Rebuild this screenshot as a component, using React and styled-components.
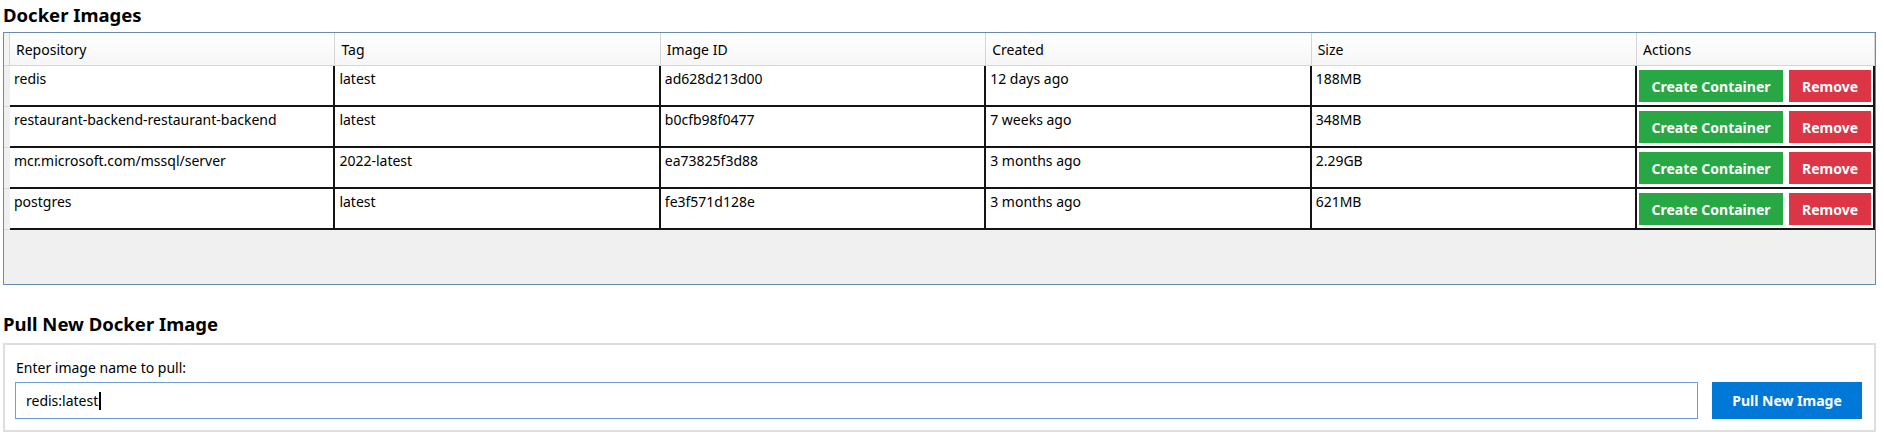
import React from 'react';
import styled, { createGlobalStyle } from 'styled-components';

const Global = createGlobalStyle`
  html, body { margin: 0; padding: 0; background: #ffffff; }
  body { font-family: "Noto Sans", "Open Sans", sans-serif; color: #000; }
  * { box-sizing: border-box; }
`;

const Page = styled.div`
  width: 1876px;
  padding: 3px 0 0 3px;
  display: flex;
  flex-direction: column;
`;

const Title = styled.h2`
  margin: 0 0 ${p => p.$mb}px 0;
  margin-top: ${p => p.$mt || 0}px;
  font-size: 18.5px;
  font-weight: 700;
  line-height: 24px;
`;

const Grid = styled.div`
  height: 253px;
  border: 1px solid #688caf;
  background: #f0f0f0;
  display: flex;
  flex-direction: column;
`;

const HeaderRow = styled.div`
  display: flex;
  height: 33px;
  background: linear-gradient(#ffffff, #f6f6f6);
  border-bottom: 1px solid #d5d5d5;
`;

const Corner = styled.div`
  width: 6px;
  flex: none;
  border-right: 1px solid #d5d5d5;
  background: #f4f4f4;
`;

const HeaderCell = styled.div`
  flex: ${p => (p.$fixed ? `0 0 ${p.$fixed}px` : '1 1 0')};
  min-width: 0;
  display: flex;
  align-items: center;
  padding-left: 6px;
  font-size: 14px;
  border-right: 1px solid #d5d5d5;
  white-space: nowrap;
`;

const Row = styled.div`
  display: flex;
  height: 41px;
`;

const RowHeader = styled.div`
  width: 6px;
  flex: none;
  background: #f0f0f0;
  border-bottom: 1px solid #d8d8d8;
`;

const Cells = styled.div`
  flex: 1;
  display: flex;
  background: #ffffff;
  border-bottom: 2px solid #141414;
`;

const Cell = styled.div`
  flex: ${p => (p.$fixed ? `0 0 ${p.$fixed}px` : '1 1 0')};
  min-width: 0;
  padding: 3px 0 0 4px;
  font-size: 14px;
  line-height: 19px;
  border-right: 2px solid #141414;
  white-space: nowrap;
  overflow: hidden;
`;

const ActionsCell = styled(Cell)`
  display: flex;
  gap: 6px;
  padding: 4px 0 0 2px;
`;

const ActionButton = styled.button`
  width: ${p => p.$w}px;
  height: 32px;
  border: none;
  margin: 0;
  padding: 0;
  background: ${p => p.$bg};
  color: #ffffff;
  font-family: "Noto Sans", "Open Sans", sans-serif;
  font-size: 14px;
  font-weight: 700;
  cursor: pointer;
`;

const PullBox = styled.div`
  height: 89px;
  border: 2px solid #dedede;
  padding: 13px 12px 0 10px;
  display: flex;
  flex-direction: column;
`;

const Label = styled.div`
  font-size: 14px;
  line-height: 19px;
  padding-left: 1px;
  margin-bottom: 5px;
`;

const PullRow = styled.div`
  display: flex;
  gap: 14px;
`;

const InputBox = styled.div`
  flex: 1;
  height: 37px;
  border: 1px solid #6d9fd6;
  display: flex;
  align-items: center;
  padding-left: 10px;
  font-size: 14px;
  background: #fff;
`;

const Caret = styled.span`
  display: inline-block;
  width: 2px;
  height: 18px;
  background: #000;
  margin-left: 1px;
`;

const PullButton = styled.button`
  width: 150px;
  height: 37px;
  border: none;
  background: #0078d7;
  color: #fff;
  font-family: "Noto Sans", "Open Sans", sans-serif;
  font-size: 14px;
  font-weight: 700;
  cursor: pointer;
`;

const columns = ['Repository', 'Tag', 'Image ID', 'Created', 'Size'];

const images = [
  ['redis', 'latest', 'ad628d213d00', '12 days ago', '188MB'],
  ['restaurant-backend-restaurant-backend', 'latest', 'b0cfb98f0477', '7 weeks ago', '348MB'],
  ['mcr.microsoft.com/mssql/server', '2022-latest', 'ea73825f3d88', '3 months ago', '2.29GB'],
  ['postgres', 'latest', 'fe3f571d128e', '3 months ago', '621MB'],
];

export default function App() {
  return (
    <>
      <Global />
      <Page>
        <Title $mb={5}>Docker Images</Title>
        <Grid>
          <HeaderRow>
            <Corner />
            {columns.map(c => (
              <HeaderCell key={c}>{c}</HeaderCell>
            ))}
            <HeaderCell $fixed={238}>Actions</HeaderCell>
          </HeaderRow>
          {images.map(row => (
            <Row key={row[2]}>
              <RowHeader />
              <Cells>
                {row.map((v, i) => (
                  <Cell key={i}>{v}</Cell>
                ))}
                <ActionsCell $fixed={238}>
                  <ActionButton $w={144} $bg="#28a745">Create Container</ActionButton>
                  <ActionButton $w={82} $bg="#dc3545">Remove</ActionButton>
                </ActionsCell>
              </Cells>
            </Row>
          ))}
        </Grid>
        <Title $mt={27} $mb={7}>Pull New Docker Image</Title>
        <PullBox>
          <Label>Enter image name to pull:</Label>
          <PullRow>
            <InputBox>
              redis:latest
              <Caret />
            </InputBox>
            <PullButton>Pull New Image</PullButton>
          </PullRow>
        </PullBox>
      </Page>
    </>
  );
}
